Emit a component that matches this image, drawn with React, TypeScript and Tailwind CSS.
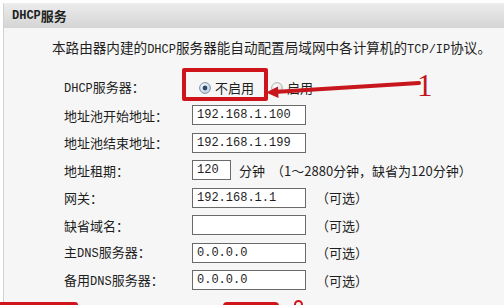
import React from 'react';

const Lat: React.FC<{ children: React.ReactNode; className?: string }> = ({ children, className = '' }) => (
  <span className={`font-['Liberation_Mono',monospace] text-[12px] ${className}`}>{children}</span>
);

const Field: React.FC<{ value?: string; w?: string }> = ({ value = '', w = 'w-[114px]' }) => (
  <input
    readOnly
    value={value}
    className={`${w} h-[20px] border border-[#6a6a6a] bg-white pl-[4px] font-['Liberation_Mono',monospace] text-[12px] text-[#1e1e1e] outline-none`}
  />
);

const Radio: React.FC<{ checked?: boolean }> = ({ checked }) => (
  <svg width="12" height="12" viewBox="0 0 12 12" className="shrink-0">
    <defs>
      <radialGradient id={checked ? 'rg1' : 'rg2'} cx="0.4" cy="0.35" r="0.7">
        <stop offset="0" stopColor="#ffffff" />
        <stop offset="1" stopColor={checked ? '#b9cbe0' : '#d8d8d8'} />
      </radialGradient>
    </defs>
    <circle cx="6" cy="6" r="5.4" fill={`url(#${checked ? 'rg1' : 'rg2'})`} stroke={checked ? '#7f93ab' : '#b4b4b4'} strokeWidth="1" />
    {checked && <circle cx="6" cy="6" r="2.4" fill="#2d4a6b" />}
  </svg>
);

const Row: React.FC<{ label: React.ReactNode; children: React.ReactNode }> = ({ label, children }) => (
  <div className="flex items-center h-[27.5px]">
    <div className="w-[128px] text-[13px] whitespace-nowrap">{label}</div>
    <div className="flex items-center text-[13px] whitespace-nowrap">{children}</div>
  </div>
);

export default function App() {
  return (
    <div className="relative w-[504px] h-[305px] overflow-hidden bg-white text-[#1e1e1e] font-['Noto_Sans_CJK_SC',sans-serif]">
      <div className="ml-[3px] mt-[3px] h-[302px] border-l border-[#d2d2d2] bg-[#f6f6f6] flex flex-col">
        <div className="h-[25px] rounded-tl-[3px] bg-linear-to-b from-[#ededed] to-[#d4d4d4] flex items-center pl-[8px] text-[13px] font-semibold text-[#222]">
          <Lat className="font-bold">DHCP</Lat>服务
        </div>

        <div className="mt-[9px] pl-[48px] h-[20px] leading-[20px] text-[13.6px] whitespace-nowrap">
          本路由器内建的<Lat>DHCP</Lat>服务器能自动配置局域网中各计算机的<Lat>TCP/IP</Lat>协议。
        </div>

        <div className="mt-[17px] pl-[60px] flex flex-col">
          <Row label={<><Lat>DHCP</Lat>服务器：</>}>
            <div className="flex items-center pl-[7px]">
              <Radio checked />
              <span className="ml-[4px]">不启用</span>
              <span className="ml-[17px] flex items-center">
                <Radio />
                <span className="ml-[4px]">启用</span>
              </span>
            </div>
          </Row>
          <Row label="地址池开始地址：">
            <Field value="192.168.1.100" />
          </Row>
          <Row label="地址池结束地址：">
            <Field value="192.168.1.199" />
          </Row>
          <Row label="地址租期：">
            <Field value="120" w="w-[39px]" />
            <span className="ml-[8px]">分钟</span>
            <span className="ml-[6px]">（1～2880分钟，缺省为120分钟）</span>
          </Row>
          <Row label="网关：">
            <Field value="192.168.1.1" />
            <span className="ml-[10px]">（可选）</span>
          </Row>
          <Row label="缺省域名：">
            <Field />
            <span className="ml-[10px]">（可选）</span>
          </Row>
          <Row label={<>主<Lat>DNS</Lat>服务器：</>}>
            <Field value="0.0.0.0" />
            <span className="ml-[10px]">（可选）</span>
          </Row>
          <Row label={<>备用<Lat>DNS</Lat>服务器：</>}>
            <Field value="0.0.0.0" />
            <span className="ml-[10px]">（可选）</span>
          </Row>
        </div>
      </div>

      {/* annotation: red box around the radio */}
      <div className="absolute left-[182px] top-[68px] w-[86px] h-[33px] border-[4px] border-[#d0141c] rounded-[2px]" />

      {/* annotation: arrow and number */}
      <svg className="absolute left-[262px] top-[74px]" width="160" height="28" viewBox="0 0 160 28">
        <line x1="12" y1="18" x2="157" y2="9" stroke="#c8161d" strokeWidth="4" strokeLinecap="round" />
        <polygon points="4,18.5 16,12.5 16.5,24" fill="#c8161d" />
      </svg>
      <div className="absolute left-[417px] top-[70px] font-['Liberation_Serif',serif] text-[31px] leading-[31px] text-[#c0161c]">1</div>

      {/* annotation remnants at the bottom edge */}
      <div className="absolute left-0 top-[302px] w-[78px] h-[6px] bg-[#d0141c] rounded-tr-[3px]" />
      <div className="absolute left-[223px] top-[302px] w-[56px] h-[8px] bg-[#d0141c] rounded-t-[4px]" />
      <div className="absolute left-[294px] top-[300px] w-[9px] h-[9px] rounded-full border-[2px] border-[#d0141c]" />
    </div>
  );
}
